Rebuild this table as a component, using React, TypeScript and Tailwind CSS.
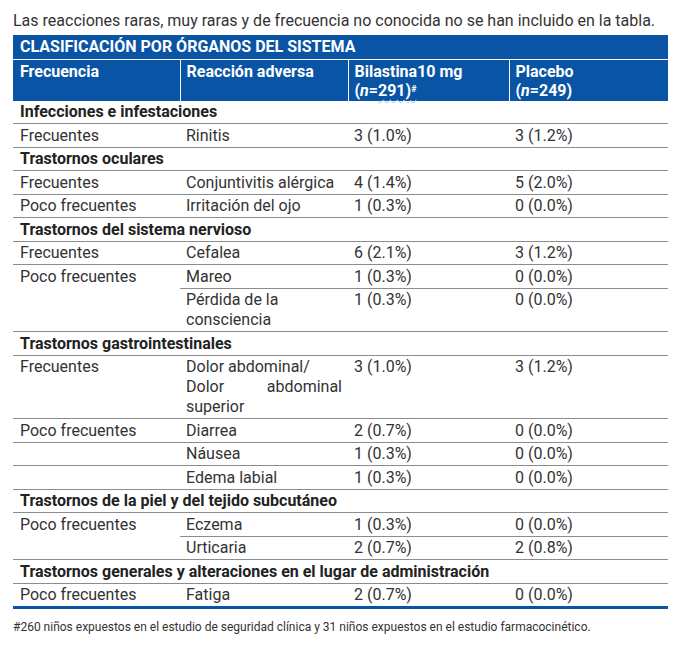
import React from "react";

type Row =
  | { kind: "group"; label: string }
  | {
      kind: "row";
      freq?: string;
      reac: React.ReactNode;
      bil: string;
      pla: string;
      partial?: boolean;
    };

const rows: Row[] = [
  { kind: "group", label: "Infecciones e infestaciones" },
  { kind: "row", freq: "Frecuentes", reac: "Rinitis", bil: "3 (1.0%)", pla: "3 (1.2%)" },
  { kind: "group", label: "Trastornos oculares" },
  { kind: "row", freq: "Frecuentes", reac: "Conjuntivitis alérgica", bil: "4 (1.4%)", pla: "5 (2.0%)" },
  { kind: "row", freq: "Poco frecuentes", reac: "Irritación del ojo", bil: "1 (0.3%)", pla: "0 (0.0%)" },
  { kind: "group", label: "Trastornos del sistema nervioso" },
  { kind: "row", freq: "Frecuentes", reac: "Cefalea", bil: "6 (2.1%)", pla: "3 (1.2%)" },
  { kind: "row", freq: "Poco frecuentes", reac: "Mareo", bil: "1 (0.3%)", pla: "0 (0.0%)", partial: true },
  { kind: "row", reac: "Pérdida de la consciencia", bil: "1 (0.3%)", pla: "0 (0.0%)" },
  { kind: "group", label: "Trastornos gastrointestinales" },
  {
    kind: "row",
    freq: "Frecuentes",
    reac: (
      <span className="block text-justify">
        Dolor abdominal/
        <br />
        Dolor abdominal superior
      </span>
    ),
    bil: "3 (1.0%)",
    pla: "3 (1.2%)",
  },
  { kind: "row", freq: "Poco frecuentes", reac: "Diarrea", bil: "2 (0.7%)", pla: "0 (0.0%)" },
  { kind: "row", reac: "Náusea", bil: "1 (0.3%)", pla: "0 (0.0%)" },
  { kind: "row", reac: "Edema labial", bil: "1 (0.3%)", pla: "0 (0.0%)" },
  { kind: "group", label: "Trastornos de la piel y del tejido subcutáneo" },
  { kind: "row", freq: "Poco frecuentes", reac: "Eczema", bil: "1 (0.3%)", pla: "0 (0.0%)", partial: true },
  { kind: "row", reac: "Urticaria", bil: "2 (0.7%)", pla: "2 (0.8%)" },
  { kind: "group", label: "Trastornos generales y alteraciones en el lugar de administración" },
  { kind: "row", freq: "Poco frecuentes", reac: "Fatiga", bil: "2 (0.7%)", pla: "0 (0.0%)" },
];

export default function App() {
  return (
    <div
      className="w-[694px] h-[648px] bg-white text-[#333333]"
      style={{ fontFamily: "Roboto, 'Liberation Sans', sans-serif" }}
    >
      <div className="pl-[13px] pt-[8px]">
        <p className="text-[16px] leading-[26px] text-[#333333]">
          Las reacciones raras, muy raras y de frecuencia no conocida no se han incluido en la tabla.
        </p>
        <table className="w-[655px] table-fixed border-collapse mt-[1px]">
          <colgroup>
            <col className="w-[167px]" />
            <col className="w-[168px]" />
            <col className="w-[161px]" />
            <col className="w-[159px]" />
          </colgroup>
          <thead>
            <tr className="bg-[#0a54a5] text-white">
              <th
                colSpan={4}
                className="text-left font-bold text-[16px] leading-[24px] px-[7px] border-b border-white"
              >
                CLASIFICACIÓN POR ÓRGANOS DEL SISTEMA
              </th>
            </tr>
            <tr className="bg-[#0a54a5] text-white align-top">
              <th className="text-left font-bold text-[16px] leading-[19px] px-[7px] pt-[2px] h-[41px] border-r border-white">
                Frecuencia
              </th>
              <th className="text-left font-bold text-[16px] leading-[19px] px-[6px] pt-[2px] border-r border-white">
                Reacción adversa
              </th>
              <th className="text-left font-bold text-[16px] leading-[19px] px-[6px] pt-[2px] border-r border-white">
                Bilastina10 mg
                <br />(<i className="font-bold">n</i>=
                <span className="underline decoration-wavy decoration-[#9cc3ea] decoration-[1px] underline-offset-[3px]">
                  291)<sup className="text-[9px]">#</sup>
                </span>
              </th>
              <th className="text-left font-bold text-[16px] leading-[19px] px-[6px] pt-[2px]">
                Placebo
                <br />(<i className="font-bold">n</i>=249)
              </th>
            </tr>
          </thead>
          <tbody>
            {rows.map((r, i) => {
              const last = i === rows.length - 1;
              if (r.kind === "group") {
                return (
                  <tr key={i}>
                    <td
                      colSpan={4}
                      className="px-[7px] pt-[1.5px] pb-[1px] text-[16px] leading-[20px] font-bold text-[#222222] border-b border-[#8c8c8c]"
                    >
                      {r.label}
                    </td>
                  </tr>
                );
              }
              const bcol = last ? "border-b-[3px] border-[#0a54a5]" : "border-b border-[#8c8c8c]";
              return (
                <tr key={i} className="align-top text-[16px] leading-[20px]">
                  <td className={`px-[7px] pt-[1.5px] pb-[1px] ${r.partial ? "" : bcol}`}>
                    {r.freq ?? ""}
                  </td>
                  <td className={`px-[6px] pt-[1.5px] pb-[1px] ${bcol}`}>{r.reac}</td>
                  <td className={`px-[6px] pt-[1.5px] pb-[1px] ${bcol}`}>{r.bil}</td>
                  <td className={`px-[6px] pt-[1.5px] pb-[1px] ${bcol}`}>{r.pla}</td>
                </tr>
              );
            })}
          </tbody>
        </table>
        <p className="text-[12px] leading-[16px] mt-[10px] text-[#333333]">
          #260 niños expuestos en el estudio de seguridad clínica y 31 niños expuestos en el estudio farmacocinético.
        </p>
      </div>
    </div>
  );
}
